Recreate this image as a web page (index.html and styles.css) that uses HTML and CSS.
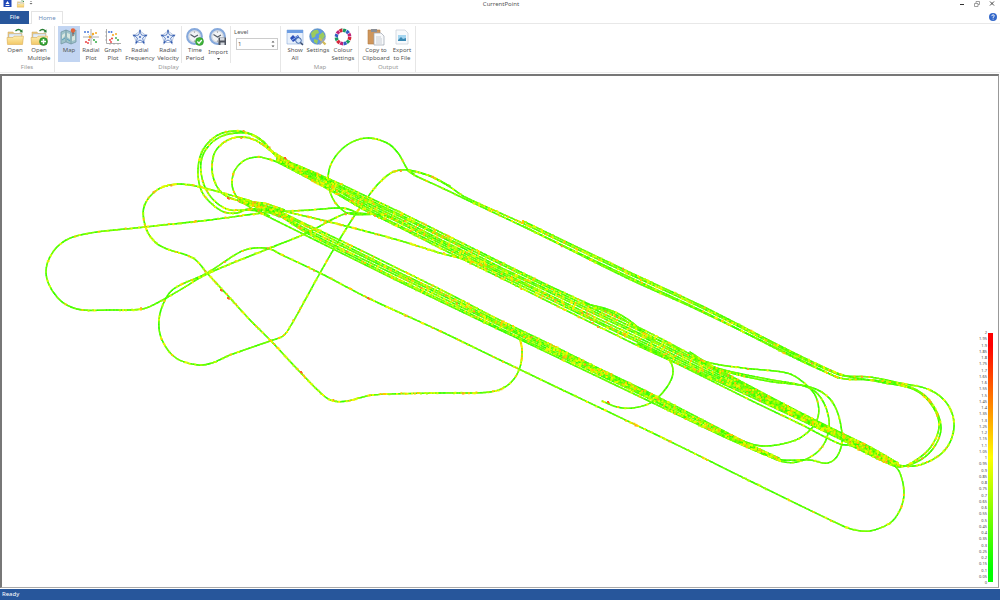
FILE: index.html
```html
<!DOCTYPE html>
<html lang="en">
<head>
<meta charset="utf-8">
<title>CurrentPoint</title>
<link rel="stylesheet" href="styles.css">
</head>
<body>
<svg class="defs" aria-hidden="true">
  <defs>
    <linearGradient id="gold" x1="0" y1="0" x2="0" y2="1"><stop offset="0" stop-color="#fdeeb0"/><stop offset="1" stop-color="#f3c866"/></linearGradient>
    <symbol id="folder" viewBox="0 0 18 18">
      <path d="M2 4h5l1 1.500h8V15H2z" fill="#ecc980" stroke="#cfa75a" stroke-width=".5"/>
      <path d="M3 6h12.500v4H3z" fill="#e4eef8" stroke="#9fb3c9" stroke-width=".4"/>
      <path d="M1 9.500h6l1-1.300h9.500L16.500 16.500H1.500z" fill="url(#gold)" stroke="#dcae58" stroke-width=".6"/>
      <path d="M9.500 3q3-3 6 0" fill="none" stroke="#287d32" stroke-width="1.200"/>
      <path d="M13.500 4.300l3.200.3-.4-3.300z" fill="#287d32"/>
    </symbol>
    <symbol id="star" viewBox="0 0 18 18">
      <g fill="none" stroke="#7d9bca" stroke-width=".6"><path d="M9 3l6 4.500-2.300 7H5.300L3 7.500z"/><path d="M9 9V1M9 9l7.500-2M9 9l4.700 7.500M9 9l-4.700 7.500M9 9L1.500 7"/></g>
      <path d="M9 4l1.700 3.100 4 .4-3 2.600.9 4.200L9 12l-3.600 2.300.9-4.200-3-2.600 4-.4z" fill="#e6eefc" stroke="#4069b8" stroke-width=".8"/>
      <g fill="#3159ae"><circle cx="9" cy="3" r=".9"/><circle cx="15" cy="7.500" r=".9"/><circle cx="12.700" cy="14.500" r=".9"/><circle cx="5.300" cy="14.500" r=".9"/><circle cx="3" cy="7.500" r=".9"/><circle cx="9" cy="9" r=".9"/></g>
    </symbol>
    <symbol id="clock" viewBox="0 0 18 18">
      <circle cx="8.500" cy="8.500" r="7.300" fill="#f1f3f6" stroke="#86a9dc" stroke-width="2.200"/>
      <circle cx="8.500" cy="8.500" r="5.600" fill="none" stroke="#b9c2ce" stroke-width=".7"/>
      <path d="M4.500 6.500l4 2.500 3.500-2" fill="none" stroke="#555d69" stroke-width="1.100"/>
      <circle cx="8.500" cy="4" r=".6" fill="#777"/><circle cx="8.500" cy="13" r=".6" fill="#777"/>
    </symbol>
  </defs>
</svg>
<div class="app">
  <header class="titlebar">
    <div class="quick">
      <svg class="quick-icon" viewBox="0 0 8 8"><path d="M0 0h8v7H0z" fill="#1f47b5"/><path d="M4 1l2 3H2zM2 5h4v1H2z" fill="#fff"/></svg>
      <svg class="quick-icon" viewBox="0 0 18 18"><use href="#folder"/></svg>
      <svg class="quick-more" viewBox="0 0 4 6"><path d="M1 1h2v.6H1zM.5 3h3L2 4.500z" fill="#666"/></svg>
    </div>
    <h1 class="title">CurrentPoint</h1>
    <div class="window-buttons">
      <button class="win" aria-label="Minimize"><svg viewBox="0 0 8 8"><path d="M2 4.500h4" stroke="#333"/></svg></button>
      <button class="win" aria-label="Restore"><svg viewBox="0 0 8 8"><path d="M1.500 3.500h3.500v3H1.500zM3 3V1.500h3.500v3H5" fill="none" stroke="#888" stroke-width=".8"/></svg></button>
      <button class="win" aria-label="Close"><svg viewBox="0 0 8 8"><path d="M2 1.500l4 4M6 1.500l-4 4" stroke="#333" stroke-width=".9"/></svg></button>
    </div>
  </header>
  <nav class="tabs">
    <button class="tab tab-file">File</button>
    <button class="tab tab-home">Home</button>
    <button class="help" aria-label="Help"><svg viewBox="0 0 8 8"><circle cx="4" cy="4" r="4" fill="#3569ca"/><path d="M2.800 3.100q0-1.300 1.300-1.300t1.200 1.200q0 .7-1.200 1.400v.6M4.100 5.700v.8" fill="none" stroke="#fff" stroke-width=".9"/></svg></button>
  </nav>
  <div class="ribbon">
    <section class="group files">
      <div class="tools">
        <button class="tool w24"><svg class="icon" viewBox="0 0 18 18"><use href="#folder"/></svg><span>Open</span></button>
        <button class="tool w24"><svg class="icon" viewBox="0 0 18 18"><use href="#folder"/><circle cx="13.500" cy="13.500" r="4" fill="#35a536" stroke="#1d7522" stroke-width=".5"/><path d="M11 13.500h5M13.500 11v5" stroke="#fff" stroke-width="1.500"/></svg><span>Open<br>Multiple</span></button>
      </div>
      <h2 class="group-name">Files</h2>
    </section>
    <section class="group display">
      <div class="tools">
        <button class="tool w22 active"><svg class="icon" viewBox="0 0 18 18"><path d="M1 4l5-2 5 2 5-2v12l-5 2-5-2-5 2z" fill="#9fc3ca" stroke="#6f929e" stroke-width=".7"/><path d="M6 2v12M11 4v12" stroke="#6b8f9c" stroke-width=".7"/><path d="M2 7l3-2v3l-3 3zM7 5l3 1v5l-3-2zM12 9l3-2v5l-3 1z" fill="#d8e6df"/><path d="M2 12l3-2M7 11l3 2M12 6l3-1" stroke="#5a9fbd"/><circle cx="13" cy="2.500" r="2.200" fill="#e2643b"/><path d="M13 4v4" stroke="#963d25" stroke-width=".8"/></svg><span>Map</span></button>
        <button class="tool w22"><svg class="icon" viewBox="0 0 18 18"><path d="M9 1v16M1 9h16" stroke="#999" stroke-width=".8"/><path d="M6 6l6 6M12 6l-6 6" stroke="#aaa" stroke-width=".5"/><g fill="#4878d8"><circle cx="3" cy="4" r="1"/><circle cx="6" cy="4" r="1"/></g><g fill="#f5aa25"><circle cx="11" cy="6" r="1.200"/><circle cx="14" cy="5" r="1"/><circle cx="8" cy="9" r="1.300"/></g><g fill="#ed4b4b"><circle cx="4" cy="14" r="1.100"/><circle cx="7" cy="12" r="1"/><circle cx="6" cy="15" r="1"/></g><g fill="#43b454"><circle cx="12" cy="12" r="1.100"/><circle cx="14" cy="14" r="1.100"/></g></svg><span>Radial<br>Plot</span></button>
        <button class="tool w22"><svg class="icon" viewBox="0 0 18 18"><path d="M2.500 1v14.500H17" fill="none" stroke="#999" stroke-width=".8"/><path d="M1 4h2M1 8h2M1 12h2M6 15v2M10 15v2M14 15v2" stroke="#999" stroke-width=".6"/><g fill="#4878d8"><circle cx="5" cy="4" r="1"/><circle cx="7.500" cy="4" r="1"/></g><g fill="#f5aa25"><circle cx="9" cy="7" r="1.100"/><circle cx="12" cy="6" r="1"/></g><g fill="#ed4b4b"><circle cx="6" cy="12" r="1"/><circle cx="8" cy="10.500" r="1.100"/><circle cx="7" cy="14" r="1"/></g><g fill="#43b454"><circle cx="12" cy="10" r="1"/><circle cx="14" cy="12" r="1.100"/></g></svg><span>Graph<br>Plot</span></button>
        <button class="tool w32"><svg class="icon" viewBox="0 0 18 18"><use href="#star"/></svg><span>Radial<br>Frequency</span></button>
        <button class="tool w24"><svg class="icon" viewBox="0 0 18 18"><use href="#star"/></svg><span>Radial<br>Velocity</span></button>
        <div class="divider"></div>
        <button class="tool w24"><svg class="icon" viewBox="0 0 18 18"><use href="#clock"/><circle cx="13.500" cy="13.500" r="4" fill="#3fb538" stroke="#23802a" stroke-width=".5"/><path d="M11.300 13.500l1.700 1.700 2.800-3.200" fill="none" stroke="#fff" stroke-width="1.300"/></svg><span>Time<br>Period</span></button>
        <button class="tool w22"><svg class="icon" viewBox="0 0 18 18"><use href="#clock"/><path d="M9.500 9.500h7.500v7.500H9.500z" fill="#4d535e"/><path d="M11 9.500h4.500v3H11zM11.500 14.500h4v2.500h-4z" fill="#d5d9df"/></svg><span class="low">Import</span><svg class="drop" viewBox="0 0 3 2"><path d="M0 0h3L1.500 2z" fill="#444"/></svg></button>
        <div class="divider"></div>
        <div class="level">
          <label for="level">Level</label>
          <div class="spin">
            <input id="level" type="text" inputmode="numeric" value="1">
            <div class="steps">
              <button aria-label="Increase level"><svg viewBox="0 0 4 3"><path d="M.5 2.500h3L2 .8z" fill="#555"/></svg></button>
              <button aria-label="Decrease level"><svg viewBox="0 0 4 3"><path d="M.5.5h3L2 2.200z" fill="#555"/></svg></button>
            </div>
          </div>
        </div>
      </div>
      <h2 class="group-name">Display</h2>
    </section>
    <section class="group mapset">
      <div class="tools">
        <button class="tool w22"><svg class="icon" viewBox="0 0 18 18"><path d="M1 2h16v14H1z" fill="#e8f0fb" stroke="#8cabd8" stroke-width=".6"/><path d="M1 2h16v3H1z" fill="#6d9de2"/><path d="M4 10l3-3 2 2 3-2 2 4-4 1-3 2z" fill="#2b4fb9"/><path d="M6 12l6-4" stroke="#8fb0f0"/><circle cx="12.500" cy="12.500" r="2.800" fill="#d7e7fa" stroke="#3d65a8"/><path d="M14.500 14.500l2.500 2.500" stroke="#3b4d70" stroke-width="1.500"/></svg><span>Show<br>All</span></button>
        <button class="tool w24"><svg class="icon" viewBox="0 0 18 18"><circle cx="8.500" cy="8.500" r="7.800" fill="#5f99e2" stroke="#4c7db5" stroke-width=".6"/><path d="M2 5q3-4 7-3l1 3-3 1-1 3-3 1zM10 7l4-3 2 4-3 4-3-1zM5 11l4 1-1 4-3-2z" fill="#9bcb5e"/><path d="M10 10l6.500 6.500" stroke="#d3bb58" stroke-width="2.300"/><path d="M10.500 16.500l5.500-6.500" stroke="#9da7b5" stroke-width="1.600"/></svg><span>Settings</span></button>
        <button class="tool w26"><svg class="icon" viewBox="0 0 18 18"><g fill="none" stroke-width="3.400"><circle cx="9" cy="9" r="6.700" pathLength="12" stroke="#d5263b" stroke-dasharray=".85 3.150"/><circle cx="9" cy="9" r="6.700" pathLength="12" stroke="#1c9a62" stroke-dasharray=".85 3.150" stroke-dashoffset="-1"/><circle cx="9" cy="9" r="6.700" pathLength="12" stroke="#355dc2" stroke-dasharray=".85 3.150" stroke-dashoffset="-2"/><circle cx="9" cy="9" r="6.700" pathLength="12" stroke="#c02378" stroke-dasharray=".85 3.150" stroke-dashoffset="-3"/></g></svg><span>Colour<br>Settings</span></button>
      </div>
      <h2 class="group-name">Map</h2>
    </section>
    <section class="group output">
      <div class="tools">
        <button class="tool w28"><svg class="icon" viewBox="0 0 18 18"><path d="M1 2h12v14H1z" fill="#cf965c" stroke="#b27c45" stroke-width=".6"/><path d="M4 1h6v3H4z" fill="#8b8f96"/><path d="M7 5h7l3 3v9H7z" fill="#f8f9fb" stroke="#9ca4af" stroke-width=".7"/><path d="M9 9h5M9 11h6M9 13h6M9 15h6" stroke="#b6bcc6" stroke-width=".7"/></svg><span>Copy to<br>Clipboard</span></button>
        <button class="tool w24"><svg class="icon" viewBox="0 0 18 18"><path d="M3 2h9l3 3v11H3z" fill="#f8fafc" stroke="#cbd2da" stroke-width=".8"/><path d="M5 7h8v6H5z" fill="#a5d6f0"/><path d="M5 12l3-3 2 2 3-1v3H5z" fill="#3b89b4"/></svg><span>Export<br>to File</span></button>
      </div>
      <h2 class="group-name">Output</h2>
    </section>
  </div>
  <main class="map">
    <svg class="tracks" id="tracks" viewBox="2 76 996 511" preserveAspectRatio="xMidYMid meet" role="img" aria-label="Survey tracks coloured by value"></svg>
    <div class="legend">
      <div class="scale" id="scale"></div>
      <div class="bar"></div>
    </div>
  </main>
  <footer class="status">Ready</footer>
</div>
<script src="tracks.js"></script>
</body>
</html>
```
FILE: styles.css
```css
* { box-sizing: border-box; }
html, body { height: 100%; margin: 0; }
body { font: 6px/8px "Noto Sans", "Open Sans", sans-serif; color: #555; background: #fff; }
button { font: inherit; color: inherit; border: 0; padding: 0; margin: 0; background: none; }
h1, h2 { margin: 0; font-size: inherit; font-weight: normal; }
svg { display: block; }
.defs { position: absolute; width: 0; height: 0; }
.app { display: flex; flex-direction: column; min-height: 100%; }

.titlebar { display: grid; grid-template-columns: 1fr auto 1fr; height: 11px; }
.quick { display: flex; gap: 4px; padding-left: 3px; }
.quick-icon { width: 9px; height: 8px; }
.quick-more { width: 4px; height: 6px; }
.title { line-height: 9px; padding-left: 2px; }
.window-buttons { display: flex; justify-content: flex-end; gap: 7px; padding-right: 4px; }
.win, .win svg { width: 8px; height: 8px; }

.tabs { display: flex; height: 13px; border-bottom: 1px solid #e8e8e8; }
.tab { line-height: 13px; height: 13px; }
.tab-file { width: 29px; background: #27569b; color: #fff; }
.tab-home { width: 32px; margin-left: 2px; border: 1px solid #e4e4e4; border-bottom: 0; background: #fff; color: #6d8bb8; }
.help { margin-left: auto; margin-right: 3px; }
.help svg { width: 8px; height: 8px; }

.ribbon { display: flex; height: 49px; padding-top: 2px; border-bottom: 1px solid #eee; }
.group { display: flex; flex-direction: column; border-right: 1px solid #e6e6e6; }
.files { padding-left: 3px; padding-right: 3px; }
.display { padding-left: 3px; padding-right: 1px; }
.mapset { padding-left: 3px; padding-right: 2px; }
.output { padding-left: 3px; padding-right: 1px; }
.tools { display: flex; height: 37px; }
.tool { display: flex; flex-direction: column; align-items: center; padding-top: 2px; height: 36px; white-space: nowrap; text-align: center; }
.icon { width: 18px; height: 18px; flex: none; }
.w22 { width: 22px; }
.w24 { width: 24px; }
.w26 { width: 26px; }
.w28 { width: 28px; }
.w32 { width: 32px; }
.active { background: #c2d5f2; }
.low { padding-top: 2px; }
.drop { width: 3px; height: 2px; margin-top: 2px; }
.divider { width: 1px; margin: 0 1px; background: #e6e6e6; }
.group-name { text-align: center; color: #999; line-height: 8px; }
.level { width: 47px; padding: 2px 1px 0 2px; }
.level label { display: block; line-height: 8px; }
.spin { display: flex; height: 12px; margin: 2px 0 0 2px; border: 1px solid #ccc; }
.spin input { flex: 1; min-width: 0; padding: 0 1px; border: 0; font: inherit; color: #555; background: none; }
.steps { display: flex; flex-direction: column; justify-content: space-evenly; padding-right: 2px; }
.steps svg { width: 4px; height: 3px; }

.map { flex: 1; display: grid; min-height: 0; margin: 1px 1px 0 0; border: 2px solid #777; border-right: 1px solid #999; border-bottom: 1px solid #aaa; background: #fff; }
.tracks { grid-area: 1 / 1; width: 100%; height: 100%; min-height: 0; }
.legend { grid-area: 1 / 1; justify-self: end; align-self: end; display: flex; gap: 1px; padding: 0 5px 5px 0; }
.scale { display: flex; flex-direction: column; justify-content: space-between; height: 255px; margin-bottom: -3px; font-size: 4px; line-height: 5px; text-align: right; color: #444; }
.bar { width: 5px; height: 249px; margin-top: 3px; background: linear-gradient(#f00 0 5%, #ff0 50%, #0f0 95%); }

.status { height: 11px; margin-top: 1px; padding-left: 2px; background: #27569b; color: #fff; line-height: 11px; }
```
FILE: tracks.js
```js
const NS = "http://www.w3.org/2000/svg";
const svg = document.getElementById("tracks");

let seed = 7;
function random() {
  seed = (seed * 16807) % 2147483647;
  return seed / 2147483647;
}

// Each track: share of warm readings, then x,y pairs.
const tracks = [
  [0.25, "290 163 277 156 270 149 263 141 251 134 236 131 220 134 207 144 200 157 198 175 202 192 212 204 224 212 237 213 248 209 262 210 280 217"],
  [0.3, "292 165 275 155 263 142 250 134 236 133 220 137 207 148 201 162 202 178 208 193 218 204 230 210 245 210 262 211"],
  [0.4, "290 162 270 150 255 140 240 137 226 141 215 152 212 167 214 180 220 191 228 197 245 202 263 203 285 210"],
  [0.15, "300 174 277 162 268 159 258 157 245 160 235 170 232 182 234 192 240 200 253 209 270 216"],
  [0.1, "414 174 408 170 398 153 387 143 367 138 347 145 332 162 328 180 332 197 340 208 350 214 383 215 400 222"],
  [0.4, "490 267 467 260 440 253 398 240 330 222 280 210 237 197 200 187 177 184 157 190 144 207 146 228 155 242 167 249 193 258 207 273 230 298 250 320 272 342 300 372 323 395 333 401 347 401 373 395 440 393 490 392 508 385 519 370 522 350 518 333"],
  [0.2, "380 215 350 213 337 217 307 233 270 248 207 274 180 290 157 303 142 309 110 310 77 309 57 297 46 272 57 247 80 235 145 227 210 220 263 213 310 210 343 208 356 212"],
  [0.2, "450 186 430 176 408 170 393 172 380 182 367 198 353 218 335 247 320 273 290 327 283 336 273 340 230 355 212 363 198 365 176 358 162 340 159 320 165 300 175 288 207 273 240 252 255 248 270 249 280 254 320 273 368 298 440 331 500 360 550 384 663 438 748 480 843 526 855 530 870 531 890 523 900 510 904 493 900 473 893 464"],
  [0.1, "638 344 655 352 668 358 673 372 667 387 652 402 633 408 617 407 602 401"],
  [0.08, "690 352 707 362 743 368 787 373 803 382 816 397 818 417 807 433 790 442 763 446 743 441 700 421"],
  [0.08, "692 356 717 368 767 379 807 387 821 398 829 420 826 440 815 454 797 462 780 461 750 447 700 425"],
  [0.08, "695 359 720 370 767 381 813 388 833 403 842 433 839 453 828 463 810 460 783 460 767 455 740 442"],
  [0.25, "408 170 430 176 450 187 465 197 520 222 627 273 700 307 837 374 870 377 900 383 930 390 948 405 954 427 945 450 923 464 904 466 887 461 850 442 800 418"],
  [0.15, "408 171 416 176 440 187 465 199 520 225 627 276 700 310 837 377 873 380 910 387 930 401 941 427 932 450 912 464 893 465 845 441"],
  [0.25, "523 221 627 271 700 305 837 373 880 382 915 390 933 407 939 427 930 448 913 462 900 467 887 463 850 445"],
  [0.08, "523 226 627 278 700 311 838 378"],
  [0.08, "638 344 700 375 750 400 800 424 840 444 854 446 887 462"],
  [0.1, "580 303 600 307 617 313 633 323 645 333 680 350"],
  [0.1, "590 308 605 310 620 317 636 328 655 340"]
];

// Parallel survey lines: x, y of the centre and half width.
function band(knots, count, warm) {
  for (let i = 0; i < count; i++) {
    const side = (i / (count - 1)) * 2 - 1;
    tracks.push([warm, knots.map(([x, y, half]) => x + " " + (y + side * half + random() - 0.5)).join(" ")]);
  }
}
band([[277, 159, 1], [300, 170, 4], [340, 190, 6], [365, 203, 7], [400, 220, 8], [450, 245, 8], [500, 270, 8], [550, 294, 8], [600, 318, 9], [650, 342, 9], [707, 370, 7], [750, 391, 5], [800, 416, 4], [843, 437, 3], [870, 450, 3], [898, 464, 1]], 8, 0.25);
band([[240, 201, 1], [275, 212, 2], [307, 229, 4], [350, 250, 5], [400, 275, 5], [450, 299, 5], [500, 324, 4], [550, 348, 4], [600, 372, 3], [653, 398, 3], [700, 422, 3], [750, 446, 2], [780, 460, 1]], 5, 0.3);
tracks.push([0.08, "255 210 307 236 400 282 500 330 653 403 720 435 765 455"]);

const cool = ["#30ff00", "#50ff00", "#60ff00", "#70ff00", "#80ff00"];
const warmColours = ["#a0ff00", "#c0ff00", "#e0ff00", "#fff000", "#ffc800"];
const dots = {};

function addDot(colour, x, y, size) {
  const left = (x - size / 2).toFixed(1), top = (y - size / 2).toFixed(1);
  dots[colour] = (dots[colour] || "") + `M${left} ${top}h${size}v${size}h-${size}z`;
}

function addPath(d) {
  const path = document.createElementNS(NS, "path");
  path.setAttribute("d", d);
  svg.append(path);
  return path;
}

// Catmull-Rom curve through the points.
function curve(values) {
  const p = [];
  for (let i = 0; i < values.length; i += 2) p.push([values[i], values[i + 1]]);
  let d = `M${p[0]}`;
  for (let i = 0; i < p.length - 1; i++) {
    const a = p[Math.max(i - 1, 0)], b = p[i], c = p[i + 1], e = p[Math.min(i + 2, p.length - 1)];
    const reach = Math.hypot(c[0] - b[0], c[1] - b[1]) / 3;
    const start = [c[0] - a[0], c[1] - a[1]], end = [e[0] - b[0], e[1] - b[1]];
    const ls = Math.hypot(...start), le = Math.hypot(...end);
    d += `C${b[0] + start[0] / ls * reach} ${b[1] + start[1] / ls * reach} ${c[0] - end[0] / le * reach} ${c[1] - end[1] / le * reach} ${c}`;
  }
  return d;
}

for (const [warm, text] of tracks) {
  const path = addPath(curve(text.split(" ").map(Number)));
  path.setAttribute("fill", "none");
  path.setAttribute("stroke", "#60ff10");
  path.setAttribute("stroke-width", "1.4");
  const length = path.getTotalLength();
  for (let s = 0; s < length; s += 1.5) {
    const { x, y } = path.getPointAtLength(s);
    const hot = random() < warm;
    const set = hot ? warmColours : cool;
    const pick = Math.floor(random() * set.length);
    addDot(set[pick], x, y + (hot ? random() * 0.8 - 0.4 : 0), hot ? 2 : 1.5);
    if (random() < warm * 0.03) addDot("#ff9a20", x, y + random() * 2 - 1, 2);
  }
}
for (const [x, y] of [[221, 290], [228, 298], [368, 298], [608, 402], [228, 198], [301, 372], [285, 158]]) {
  addDot("#ff6020", x, y, 2);
  addDot("#ff6020", x + 1, y + 1, 1.5);
}
for (const colour in dots) addPath(dots[colour]).setAttribute("fill", colour);

const scale = document.getElementById("scale");
for (let i = 40; i >= 0; i--) {
  const label = document.createElement("span");
  label.textContent = String(Math.round(i * 5) / 100);
  scale.append(label);
}
```
